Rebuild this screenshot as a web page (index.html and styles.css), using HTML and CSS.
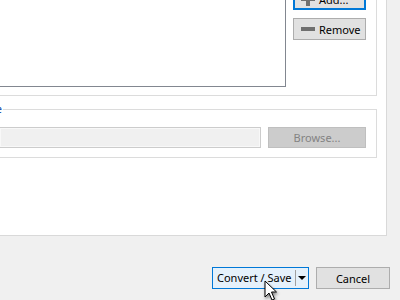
FILE: index.html
```html
<!DOCTYPE html>
<html lang="en">
<head>
    <meta charset="UTF-8">
    <title>Convert</title>
    <link rel="stylesheet" href="styles.css">
</head>
<body>
    <div class="tab-page">
        <div class="group source">
            <div class="file-list"></div>
            <div class="side-buttons">
                <button class="btn add"><span class="icon-plus"></span>Add...</button>
                <button class="btn remove"><span class="icon-minus"></span>Remove</button>
            </div>
        </div>

        <div class="group dest">
            <span class="group-title">Destination file</span>
            <input class="path-field" type="text" disabled>
            <button class="btn browse" disabled>Browse...</button>
        </div>
    </div>

    <div class="dialog-buttons">
        <div class="split-btn">
            <span class="split-main">Convert / Save</span>
            <span class="split-arrow"></span>
        </div>
        <button class="btn cancel">Cancel</button>
    </div>

    <svg class="cursor" width="14" height="22" viewBox="0 0 14 22">
        <path d="M1 1 L1 17 L5 13 L8 20 L10.5 19 L7.5 12 L12.5 12 Z" fill="#fff" stroke="#000" stroke-width="1" stroke-linejoin="miter"/>
    </svg>
</body>
</html>
```

FILE: styles.css
```css
* {
    box-sizing: border-box;
}

body {
    margin: 0;
    width: 400px;
    height: 300px;
    overflow: hidden;
    background: #f0f0f0;
    font-family: "Noto Sans", "Open Sans", sans-serif;
    font-size: 11px;
    color: #000;
    position: relative;
}

.tab-page {
    width: 387px;
    height: 236px;
    background: #fff;
    border-right: 1px solid #d9d9d9;
    border-bottom: 1px solid #d9d9d9;
    overflow: hidden;
}

.group {
    width: 377px;
    border-right: 1px solid #dcdcdc;
    border-bottom: 1px solid #dcdcdc;
}

.source {
    display: flex;
    gap: 7px;
    margin-top: -40px;
    padding: 0 10px 8px 0;
}

.file-list {
    width: 286px;
    height: 127px;
    border-right: 1px solid #828790;
    border-bottom: 1px solid #828790;
}

.side-buttons {
    display: flex;
    flex-direction: column;
    gap: 8px;
    margin-top: 28px;
}

.btn {
    font-family: inherit;
    font-size: 11px;
    height: 22px;
    padding: 0;
    background: #e1e1e1;
    border: 1px solid #adadad;
    color: #000;
    display: flex;
    align-items: center;
    justify-content: center;
    white-space: nowrap;
}

.add,
.remove {
    width: 73px;
    justify-content: flex-start;
    padding-left: 7px;
    gap: 4px;
}

.add {
    border-color: #0078d7;
    border-width: 2px;
    padding-left: 6px;
}

.icon-plus,
.icon-minus {
    position: relative;
    width: 14px;
    height: 14px;
    flex: none;
}

.icon-minus:before,
.icon-plus:before,
.icon-plus:after {
    content: "";
    position: absolute;
    background: #6f6f6f;
}

.icon-minus:before,
.icon-plus:before {
    left: 0;
    right: 0;
    top: 5px;
    height: 4px;
}

.icon-plus:after {
    top: 0;
    bottom: 0;
    left: 5px;
    width: 4px;
}

.dest {
    position: relative;
    margin-top: 13px;
    border-top: 1px solid #dcdcdc;
    display: flex;
    gap: 7px;
    padding: 17px 10px 9px 0;
}

.group-title {
    position: absolute;
    top: -9px;
    right: calc(100% - 3px);
    padding-right: 1px;
    background: #fff;
    color: #0a3fa8;
    white-space: nowrap;
    line-height: 16px;
}

.path-field {
    width: 261px;
    height: 21px;
    margin: 0;
    border: 1px solid #cccccc;
    border-left: none;
    background: #f0f0f0;
    box-shadow: inset 0 0 0 1px #f8f8f8;
}

.browse {
    width: 98px;
    height: 21px;
    background: #cccccc;
    border-color: #bfbfbf;
    color: #838383;
}

.dialog-buttons {
    display: flex;
    justify-content: flex-end;
    gap: 7px;
    padding: 31px 10px 0 0;
}

.split-btn {
    width: 97px;
    height: 22px;
    display: flex;
    align-items: center;
    background: #e5f1fb;
    border: 1px solid #0078d7;
}

.split-main {
    width: 83px;
    padding-left: 4px;
    border-right: 1px solid #a0a0a0;
    line-height: 16px;
    white-space: nowrap;
}

.split-arrow {
    flex: 1;
    display: flex;
    justify-content: center;
}

.split-arrow:before {
    content: "";
    border-left: 4px solid transparent;
    border-right: 4px solid transparent;
    border-top: 4px solid #000;
}

.cancel {
    width: 74px;
}

.cursor {
    position: absolute;
    left: 264px;
    top: 280px;
    filter: drop-shadow(1px 2px 1.5px rgba(0, 0, 0, 0.45));
}
```
